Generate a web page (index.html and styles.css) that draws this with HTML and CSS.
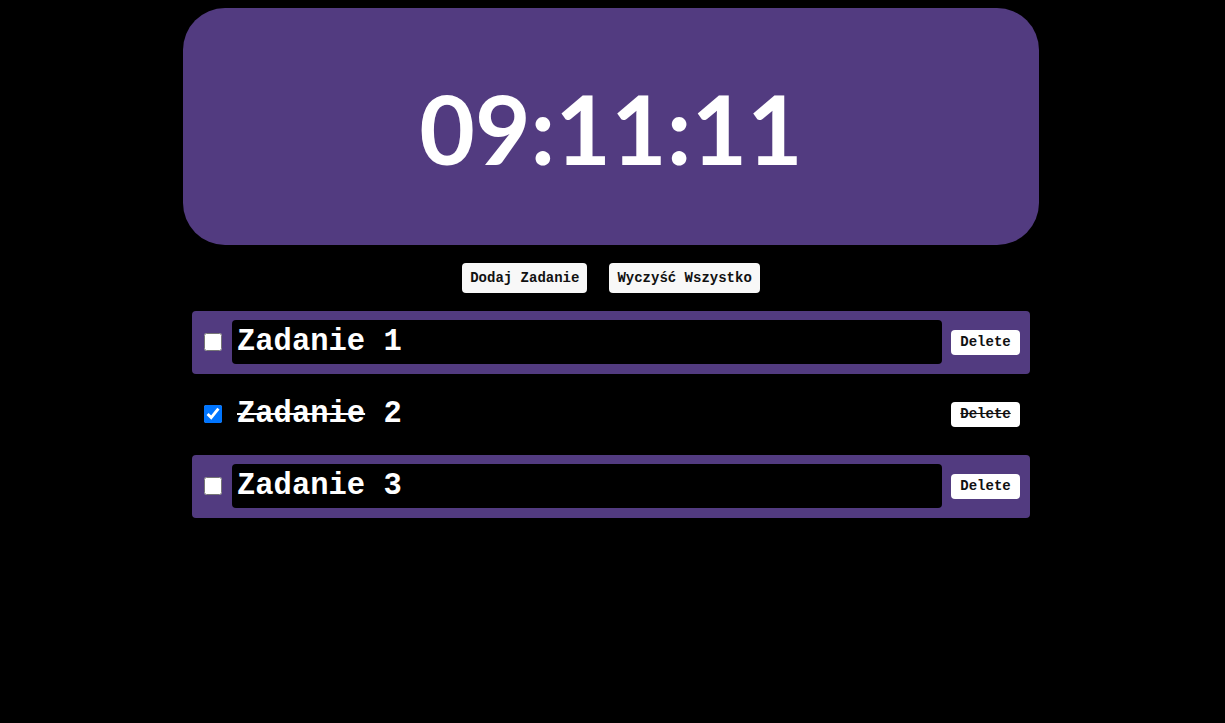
FILE: index.html
```html
<!DOCTYPE html>
<html lang="pl">
<head>
<meta charset="utf-8">
<title>Zegar i zadania</title>
<link rel="stylesheet" href="styles.css">
</head>
<body>
<main class="app">
  <div class="clock">09:11:11</div>
  <div class="actions">
    <button class="btn">Dodaj Zadanie</button>
    <button class="btn">Wyczyść Wszystko</button>
  </div>
  <ul class="tasks">
    <li class="task">
      <input type="checkbox" class="check">
      <input type="text" class="task-input" value="Zadanie 1">
      <button class="del">Delete</button>
    </li>
    <li class="task done">
      <input type="checkbox" class="check" checked>
      <div class="task-text"><span class="strike">Zadanie</span> 2</div>
      <button class="del">Delete</button>
    </li>
    <li class="task">
      <input type="checkbox" class="check">
      <input type="text" class="task-input" value="Zadanie 3">
      <button class="del">Delete</button>
    </li>
  </ul>
</main>
</body>
</html>
```

FILE: styles.css
```css
html, body {
  margin: 0;
  background: #000;
}
body {
  padding: 8px 11px 8px 8px;
  font-family: "Liberation Mono", "Courier New", monospace;
}
.app {
  width: 856px;
  margin: 0 auto;
}
.clock {
  height: 237px;
  background: #523b80;
  border-radius: 42px;
  display: flex;
  align-items: center;
  justify-content: center;
  color: #fff;
  font-family: "Lato", "DejaVu Sans", sans-serif;
  font-weight: 700;
  font-size: 96px;
  padding-top: 2px;
  box-sizing: border-box;
}
.actions {
  display: flex;
  justify-content: center;
  gap: 22px;
  margin: 18px 0 18px;
}
.btn {
  font-family: "Liberation Mono", "Courier New", monospace;
  font-weight: 700;
  font-size: 14px;
  height: 30px;
  padding: 0 8px;
  background: #f8f8f8;
  color: #111;
  border: none;
  border-radius: 4px;
}
.tasks {
  list-style: none;
  margin: 0 9px;
  padding: 0;
  display: flex;
  flex-direction: column;
  gap: 9px;
}
.task {
  display: flex;
  align-items: center;
  gap: 10px;
  padding: 9px 10px 10px 12px;
  background: #523b80;
  border-radius: 4px;
}
.check {
  width: 18px;
  height: 18px;
  margin: 0;
  flex: none;
}
.task-input,
.task-text {
  flex: 1;
  height: 44px;
  box-sizing: border-box;
  background: #000;
  color: #fff;
  border: none;
  border-radius: 4px;
  padding: 0 5px;
  font-family: "Liberation Mono", "Courier New", monospace;
  font-weight: 700;
  font-size: 30.5px;
  outline: none;
}
.task-text {
  display: flex;
  align-items: center;
  white-space: pre;
  background: transparent;
}
.strike {
  text-decoration: line-through;
  text-decoration-thickness: 2px;
}
.del {
  font-family: "Liberation Mono", "Courier New", monospace;
  font-weight: 700;
  font-size: 14px;
  height: 25px;
  width: 69px;
  padding: 0;
  background: #fff;
  color: #111;
  border: none;
  border-radius: 4px;
  margin-left: -1px;
}
.task.done {
  background: transparent;
}
.task.done .del {
  text-decoration: line-through;
}
```
